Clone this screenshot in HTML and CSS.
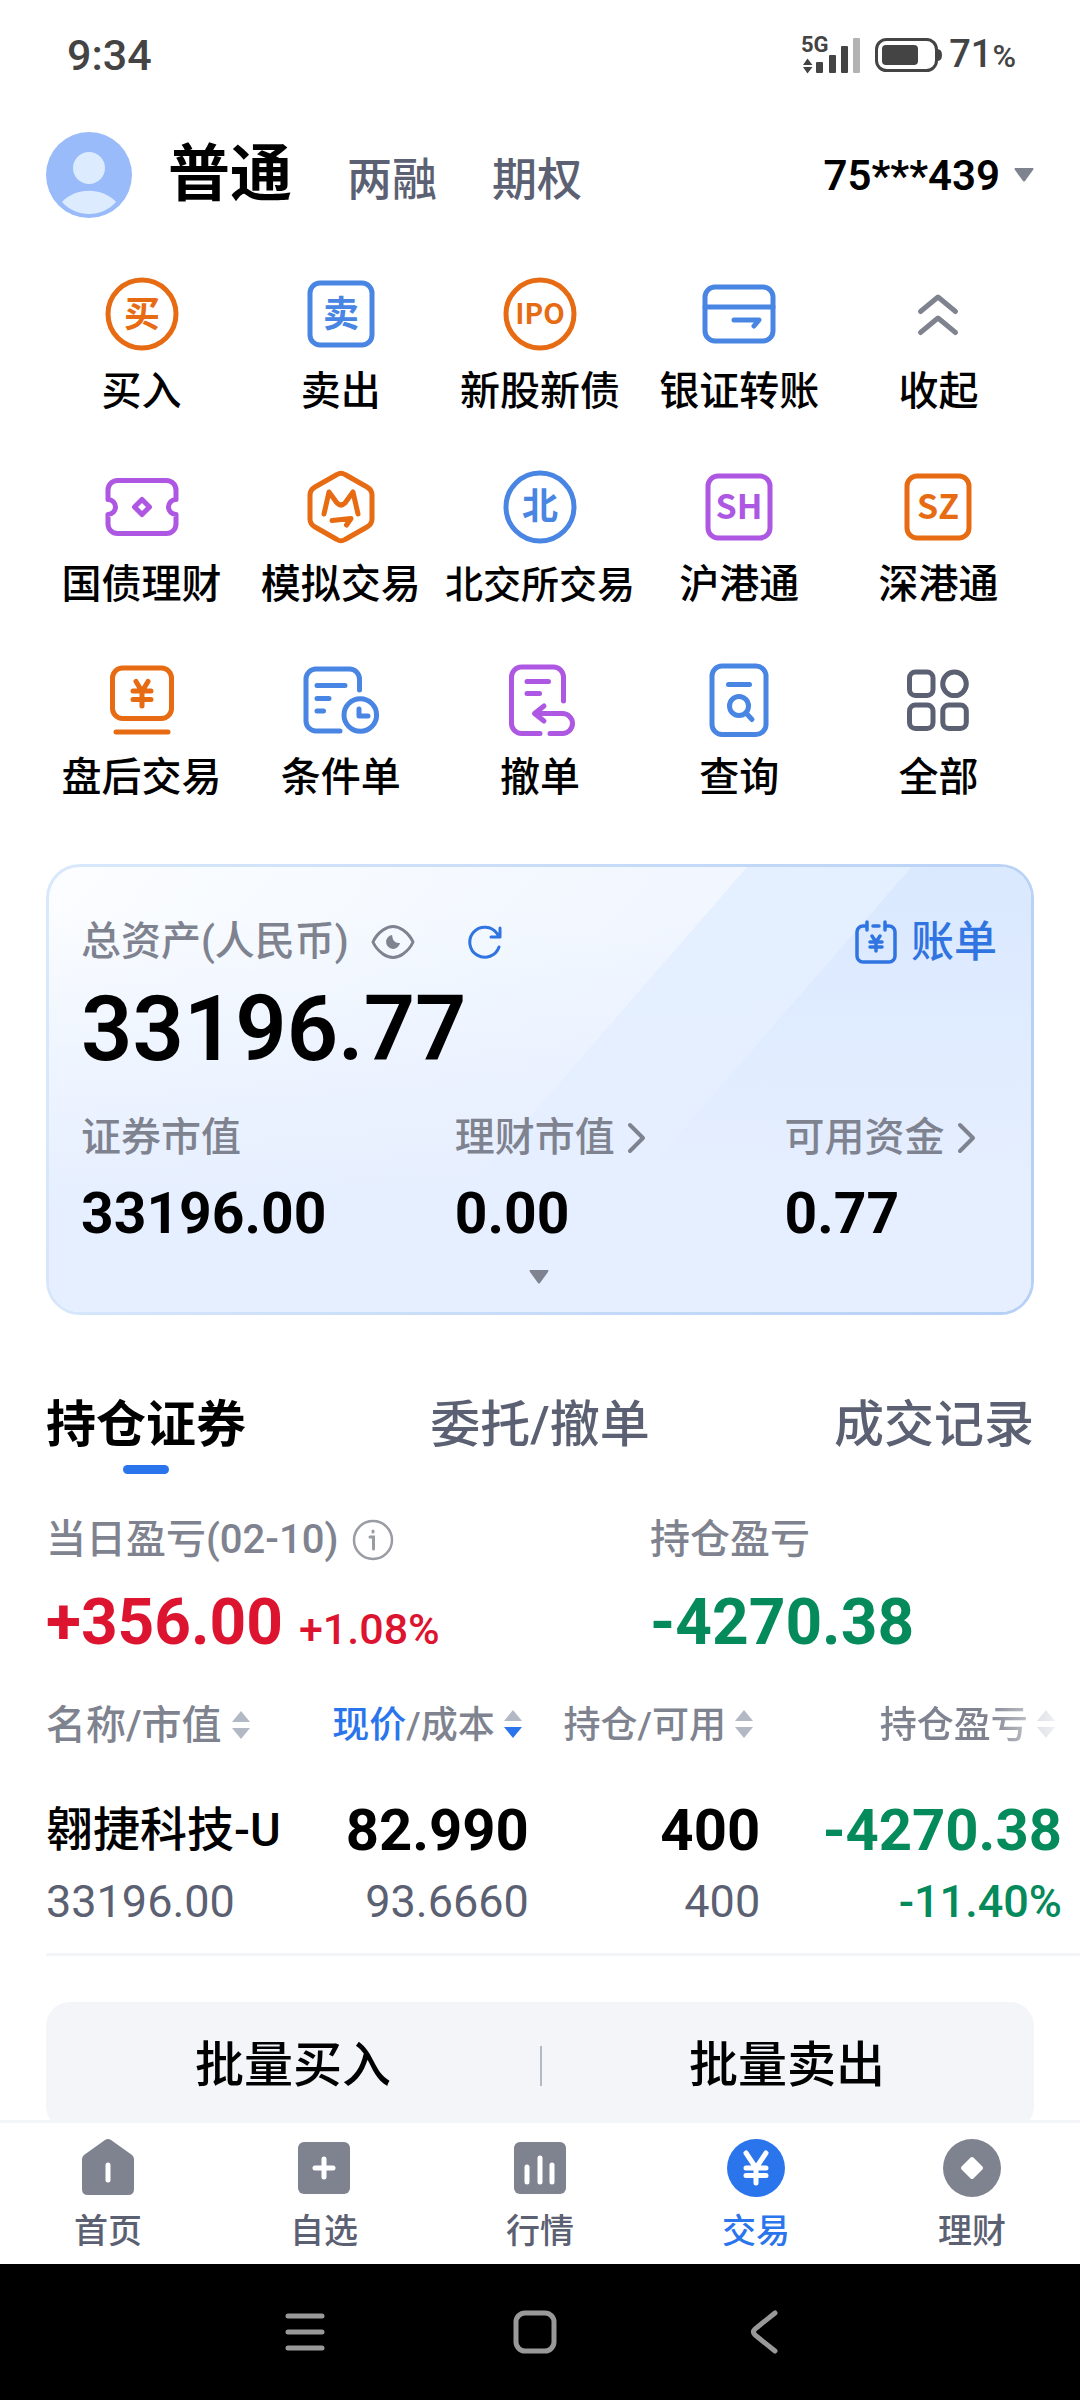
FILE: index.html
```html
<!DOCTYPE html>
<html lang="zh-CN">
<head>
    <meta charset="UTF-8">
    <meta name="viewport" content="width=device-width, initial-scale=1.0">
    <title>交易</title>
    <link rel="stylesheet" href="styles.css">
</head>
<body>
    <div class="app">
        <!-- Phone status bar -->
        <div class="status-bar">
            <span class="time">9:34</span>
            <div class="status-icons">
                <svg class="signal" viewBox="0 0 60 42" width="60" height="42">
                    <text x="0" y="18" class="signal-text">5G</text>
                    <path d="M6.500 24.500l5 6.500H2zM6.500 39.500l5-6.500H2z" />
                    <rect x="15" y="28" width="7" height="11" rx="1" />
                    <rect x="28" y="21" width="7" height="18" rx="1" />
                    <rect x="40" y="12" width="7" height="27" rx="1" />
                    <rect x="52" y="4" width="7" height="35" rx="1" fill="#b3b3b3" />
                </svg>
                <svg class="battery" viewBox="0 0 67 36" width="67" height="36">
                    <rect x="1.500" y="2.500" width="60" height="31" rx="10" fill="none" stroke="#444" stroke-width="3" />
                    <rect x="7" y="8" width="36" height="20" rx="4" />
                    <path d="M62 12q5 0 5 6t-5 6z" />
                </svg>
                <span class="battery-level">71<small>%</small></span>
            </div>
        </div>

        <!-- Account header -->
        <header class="header">
            <svg class="avatar" viewBox="0 0 86 86" width="86" height="86">
                <circle cx="43" cy="43" r="43" fill="#9abbf9" />
                <circle cx="43" cy="36" r="16" fill="#ddebff" />
                <path d="M16 70C30 55 56 55 70 70C56 86 30 86 16 70z" fill="#ddebff" />
            </svg>
            <nav class="account-types">
                <a href="#" class="active">普通</a>
                <a href="#">两融</a>
                <a href="#">期权</a>
            </nav>
            <button class="account-btn" type="button">75***439
                <svg viewBox="0 0 20 14" width="20" height="14"><path d="M1 0h18q1 0 0 2l-8 11q-1 1-2 0L1 2q-1-2 0-2z" fill="#7f8390" /></svg>
            </button>
        </header>

        <main class="content">
            <!-- Shortcuts -->
            <nav class="shortcuts">
                <a href="#" class="shortcut">
                    <svg class="icon orange" viewBox="0 0 80 80">
                        <circle cx="40" cy="40" r="34" />
                        <text x="40" y="53" class="cjk">买</text>
                    </svg>
                    <span>买入</span>
                </a>
                <a href="#" class="shortcut">
                    <svg class="icon blue" viewBox="0 0 80 80">
                        <rect x="9" y="9" width="62" height="62" rx="10" />
                        <text x="40" y="53" class="cjk">卖</text>
                    </svg>
                    <span>卖出</span>
                </a>
                <a href="#" class="shortcut">
                    <svg class="icon orange" viewBox="0 0 80 80">
                        <circle cx="40" cy="40" r="34" />
                        <text x="40" y="50" class="latin-small">IPO</text>
                    </svg>
                    <span>新股新债</span>
                </a>
                <a href="#" class="shortcut">
                    <svg class="icon blue" viewBox="0 0 80 80">
                        <rect x="6" y="13" width="68" height="54" rx="10" />
                        <path d="M6 33h68M35 46h25l-5 6" />
                    </svg>
                    <span>银证转账</span>
                </a>
                <a href="#" class="shortcut">
                    <svg class="icon gray" viewBox="0 0 80 80">
                        <path d="M22.500 37.500L40 23l17.500 14.500M22.500 58.500L40 44l17.500 14.500" />
                    </svg>
                    <span>收起</span>
                </a>
                <a href="#" class="shortcut">
                    <svg class="icon purple" viewBox="0 0 80 80">
                        <path d="M6 32.500V23a9.500 9.500 0 0 1 9.500-9.500h49A9.500 9.500 0 0 1 74 23v9.500a7.500 7.500 0 0 0 0 15V57a9.500 9.500 0 0 1-9.500 9.500h-49A9.500 9.500 0 0 1 6 57v-9.500a7.500 7.500 0 0 0 0-15z" />
                        <path d="M40 32.500l7.500 7.500-7.500 7.500-7.500-7.500z" />
                    </svg>
                    <span>国债理财</span>
                </a>
                <a href="#" class="shortcut">
                    <svg class="icon orange" viewBox="0 0 80 80">
                        <path d="M36 7.500q4-2.500 8 0L66 20q5 3 5 8v24q0 5-5 8L44 72.500q-4 2.500-8 0L14 60q-5-3-5-8V28q0-5 5-8z" />
                        <path d="M23 47l5-22 8 11q4 4 8 0l8-11 5 22M31 53.500l19-2-4.500 6.500" />
                    </svg>
                    <span>模拟交易</span>
                </a>
                <a href="#" class="shortcut">
                    <svg class="icon blue" viewBox="0 0 80 80">
                        <circle cx="40" cy="40" r="34" />
                        <text x="40" y="52" class="cjk">北</text>
                    </svg>
                    <span class="long">北交所交易</span>
                </a>
                <a href="#" class="shortcut">
                    <svg class="icon purple" viewBox="0 0 80 80">
                        <rect x="9" y="9" width="62" height="62" rx="10" />
                        <text x="40" y="52" class="latin">SH</text>
                    </svg>
                    <span>沪港通</span>
                </a>
                <a href="#" class="shortcut">
                    <svg class="icon orange" viewBox="0 0 80 80">
                        <rect x="9" y="9" width="62" height="62" rx="10" />
                        <text x="40" y="52" class="latin">SZ</text>
                    </svg>
                    <span>深港通</span>
                </a>
                <a href="#" class="shortcut">
                    <svg class="icon orange" viewBox="0 0 80 80">
                        <rect x="10.500" y="8" width="59" height="50.500" rx="10" />
                        <path d="M14 72h52M34 21.500l6 10 6-10M31 31h18M31 39.500h18M40 31v15" />
                    </svg>
                    <span>盘后交易</span>
                </a>
                <a href="#" class="shortcut">
                    <svg class="icon blue" viewBox="0 0 80 80">
                        <path d="M58.500 30V19a10 10 0 0 0-10-10H15A10 10 0 0 0 5 19v42a10 10 0 0 0 10 10h24" />
                        <path d="M16 25.500h28M16 38.500h12M16 51h6.500" />
                        <circle cx="59.300" cy="55" r="16.300" />
                        <path d="M58 49v7h9" />
                    </svg>
                    <span>条件单</span>
                </a>
                <a href="#" class="shortcut">
                    <svg class="icon purple" viewBox="0 0 80 80">
                        <path d="M63.500 41V17a10 10 0 0 0-10-10H21.500a10 10 0 0 0-10 10v46.500a10 10 0 0 0 10 10H40" />
                        <path d="M27 21.500h21.500M27 33.500h12.500M44 46l-9.500 7.500L44 61M35 53.500h27.500a10 10 0 0 1 0 20H50" />
                    </svg>
                    <span>撤单</span>
                </a>
                <a href="#" class="shortcut">
                    <svg class="icon blue" viewBox="0 0 80 80">
                        <rect x="13" y="6" width="54" height="68.500" rx="10" />
                        <path d="M29.500 24.500h21M47 53l6 6.500" />
                        <circle cx="40" cy="46" r="9.500" />
                    </svg>
                    <span>查询</span>
                </a>
                <a href="#" class="shortcut">
                    <svg class="icon dark" viewBox="0 0 80 80">
                        <rect x="11.500" y="12" width="23.500" height="23.500" rx="6" />
                        <circle cx="56.500" cy="23.800" r="11.800" />
                        <rect x="11.500" y="45" width="23.500" height="23.500" rx="6" />
                        <rect x="44.800" y="45" width="23.500" height="23.500" rx="6" />
                    </svg>
                    <span>全部</span>
                </a>
            </nav>

            <!-- Total assets -->
            <section class="assets-card">
                <div class="assets-top">
                    <span class="label">总资产(人民币)</span>
                    <button class="icon-btn eye-btn" type="button" aria-label="隐藏金额">
                        <svg viewBox="0 0 44 36" width="44" height="36" fill="none" stroke="#7f8390" stroke-width="3">
                            <path d="M2 18Q5 11 12 6Q22-1 32 6Q39 11 42 18Q39 25 32 30Q22 37 12 30Q5 25 2 18z" stroke-linejoin="round" />
                            <path d="M21 11a7 7 0 1 0 8 8q-7 1-8-8z" fill="#7f8390" stroke="none" />
                        </svg>
                    </button>
                    <button class="icon-btn" type="button" aria-label="刷新">
                        <svg viewBox="0 0 36 36" width="36" height="36" fill="none" stroke="#2f74e0" stroke-width="3" stroke-linecap="round" stroke-linejoin="round">
                            <path d="M32 23A15 15 0 1 1 30 9.500L32 12M33 4v9h-9" />
                        </svg>
                    </button>
                    <a href="#" class="bill-link">
                        <svg viewBox="0 0 42 44" width="42" height="44" fill="none" stroke="#2f74e0" stroke-width="3.500" stroke-linecap="round" stroke-linejoin="round">
                            <path d="M12 6H8a6 6 0 0 0-6 6v24a6 6 0 0 0 6 6h26a6 6 0 0 0 6-6V12a6 6 0 0 0-6-6h-4M12 2v8M30 2v8M18 6h6" />
                            <path d="M17 16l4 6 4-6M15 22h12M15 27h12M21 22v9" />
                        </svg>
                        账单
                    </a>
                </div>
                <div class="total">33196.77</div>
                <dl class="asset-list">
                    <div>
                        <dt>证券市值</dt>
                        <dd>33196.00</dd>
                    </div>
                    <div>
                        <dt>理财市值
                            <svg viewBox="0 0 20 32" width="20" height="32"><path d="M3 3l13 13L3 29" class="chevron" /></svg>
                        </dt>
                        <dd>0.00</dd>
                    </div>
                    <div>
                        <dt>可用资金
                            <svg viewBox="0 0 20 32" width="20" height="32"><path d="M3 3l13 13L3 29" class="chevron" /></svg>
                        </dt>
                        <dd>0.77</dd>
                    </div>
                </dl>
                <button class="icon-btn expand-btn" type="button" aria-label="展开">
                    <svg viewBox="0 0 20 14" width="20" height="14"><path d="M1 0h18q1 0 0 2l-8 11q-1 1-2 0L1 2q-1-2 0-2z" fill="#7f8390" /></svg>
                </button>
            </section>

            <!-- Holdings -->
            <section class="holdings">
                <div class="holding-tabs">
                    <button class="active" type="button">持仓证券</button>
                    <button type="button">委托/撤单</button>
                    <button type="button">成交记录</button>
                </div>

                <div class="profit">
                    <div>
                        <div class="profit-label">当日盈亏(02-10)
                            <svg viewBox="0 0 42 42" width="42" height="42" fill="none" stroke="#999ca3" stroke-width="2.500" stroke-linecap="round">
                                <circle cx="21" cy="21" r="19" />
                                <path d="M18 18h3.500v12M21 12v1" stroke-width="3" />
                            </svg>
                        </div>
                        <div class="profit-value up">+356.00 <small>+1.08%</small></div>
                    </div>
                    <div>
                        <div class="profit-label">持仓盈亏</div>
                        <div class="profit-value down">-4270.38</div>
                    </div>
                </div>

                <div class="table-wrap">
                    <table class="stock-table">
                        <thead>
                            <tr>
                                <th class="name-col">名称/市值 <svg class="sort" viewBox="0 0 18 28"><path d="M9 0l9 11H0z" /><path d="M9 28l9-11H0z" /></svg></th>
                                <th><b>现价</b>/成本 <svg class="sort" viewBox="0 0 18 28"><path d="M9 0l9 11H0z" /><path d="M9 28l9-11H0z" class="sort-on" /></svg></th>
                                <th>持仓/可用 <svg class="sort" viewBox="0 0 18 28"><path d="M9 0l9 11H0z" /><path d="M9 28l9-11H0z" /></svg></th>
                                <th class="fade">持仓盈亏 <svg class="sort" viewBox="0 0 18 28"><path d="M9 0l9 11H0z" /><path d="M9 28l9-11H0z" /></svg></th>
                            </tr>
                        </thead>
                        <tbody>
                            <tr class="main-row">
                                <td class="stock-name">翱捷科技-U</td>
                                <td>82.990</td>
                                <td>400</td>
                                <td class="down">-4270.38</td>
                            </tr>
                            <tr class="sub-row">
                                <td>33196.00</td>
                                <td>93.6660</td>
                                <td>400</td>
                                <td class="down">-11.40%</td>
                            </tr>
                        </tbody>
                    </table>
                </div>

                <div class="batch">
                    <button type="button">批量买入</button>
                    <button type="button">批量卖出</button>
                </div>
            </section>
        </main>

        <!-- Bottom tabs -->
        <nav class="tab-bar">
            <a href="#">
                <svg viewBox="0 0 60 60" fill="#7f8390">
                    <path d="M27 2q3-2 6 0l21 15q2 2 2 4v30q0 6-6 6H10q-6 0-6-6V21q0-2 2-4z" />
                    <path d="M30 27v15" stroke="#fff" stroke-width="5" stroke-linecap="round" />
                </svg>
                首页
            </a>
            <a href="#">
                <svg viewBox="0 0 60 60" fill="#7f8390">
                    <rect x="4" y="4" width="52" height="52" rx="6" />
                    <path d="M21 30h18M30 21v18" stroke="#fff" stroke-width="5" stroke-linecap="round" />
                </svg>
                自选
            </a>
            <a href="#">
                <svg viewBox="0 0 60 60" fill="#7f8390">
                    <rect x="4" y="4" width="52" height="52" rx="6" />
                    <path d="M17 29v15M30 20v24M42 27v17" stroke="#fff" stroke-width="5" stroke-linecap="round" />
                </svg>
                行情
            </a>
            <a href="#" class="active">
                <svg viewBox="0 0 60 60" fill="none" stroke="#fff" stroke-width="5" stroke-linecap="round" stroke-linejoin="round">
                    <circle cx="30" cy="30" r="29" fill="#2b75ec" stroke="none" />
                    <path d="M20 15l10 15 10-15M20 30h20M20 37.500h20M30 30v15" />
                </svg>
                交易
            </a>
            <a href="#">
                <svg viewBox="0 0 60 60" fill="#7f8390">
                    <circle cx="30" cy="30" r="29" />
                    <path d="M30 21l9 9-9 9-9-9z" fill="#fff" stroke="#fff" stroke-width="4" stroke-linejoin="round" />
                </svg>
                理财
            </a>
        </nav>

        <!-- Android navigation keys -->
        <div class="system-nav">
            <button type="button" aria-label="最近任务">
                <svg viewBox="0 0 44 44"><path d="M5 6h34M5 22h34M5 38h34" /></svg>
            </button>
            <button type="button" aria-label="主屏幕">
                <svg viewBox="0 0 44 44"><rect x="3" y="3" width="38" height="38" rx="9" /></svg>
            </button>
            <button type="button" aria-label="返回">
                <svg viewBox="0 0 44 44"><path d="M32 3L12 19q-3 3 0 6l20 16" /></svg>
            </button>
        </div>
    </div>
</body>
</html>
```

FILE: styles.css
```css
* {
    box-sizing: border-box;
}

body {
    margin: 0;
    font-family: Roboto, "Noto Sans CJK SC", sans-serif;
    background-color: #fff;
    color: #000;
}

a {
    color: inherit;
    text-decoration: none;
}

button {
    padding: 0;
    border: none;
    background: none;
    color: inherit;
    font: inherit;
    cursor: pointer;
}

svg {
    display: block;
    flex: none;
}

.app {
    display: flex;
    flex-direction: column;
    height: 100vh;
}

/* Status bar */
.status-bar {
    display: flex;
    justify-content: space-between;
    align-items: center;
    padding: 30px 64px 0 67px;
    color: #444;
    fill: #444;
    font-weight: 500;
    line-height: 48px;
}

.time {
    font-size: 43px;
}

.status-icons {
    display: flex;
    align-items: center;
}

.signal {
    overflow: visible;
}

.signal-text {
    font-size: 22px;
    font-weight: 700;
}

.battery {
    margin: 0 7px 0 14px;
}

.battery-level {
    font-size: 38px;
}

.battery-level small {
    font-size: 32px;
}

/* Header */
.header {
    display: flex;
    align-items: center;
    padding: 52px 46px 0;
}

.account-types {
    display: flex;
    align-items: baseline;
    gap: 55px;
    height: 86px;
    margin-left: 36px;
    color: #5b6172;
    font-size: 45px;
    font-weight: 500;
    line-height: 86px;
}

.account-types .active {
    color: #000;
    font-size: 62px;
    font-weight: 700;
}

.account-btn {
    display: flex;
    align-items: center;
    gap: 14px;
    margin-left: auto;
    font-size: 42px;
    font-weight: 600;
}

.content {
    flex: 1;
    min-height: 0;
    overflow: hidden;
}

/* Shortcut grid */
.shortcuts {
    display: grid;
    grid-template-columns: repeat(5, 1fr);
    row-gap: 51px;
    padding: 56px 42px 0;
}

.shortcut {
    display: flex;
    flex-direction: column;
    align-items: center;
    gap: 14px;
    font-size: 40px;
    font-weight: 500;
    line-height: 48px;
    white-space: nowrap;
}

.shortcut .long {
    font-size: 38px;
}

.icon {
    width: 80px;
    height: 80px;
    fill: none;
    stroke: currentColor;
    stroke-width: 5;
    stroke-linecap: round;
    stroke-linejoin: round;
}

.icon text {
    fill: currentColor;
    stroke: none;
    font-family: "Noto Sans CJK SC", sans-serif;
    font-weight: 700;
    text-anchor: middle;
}

.icon .cjk {
    font-size: 36px;
}

.icon .latin {
    font-size: 34px;
}

.icon .latin-small {
    font-size: 28px;
}

.orange {
    color: #e76b12;
}

.blue {
    color: #4985e2;
}

.purple {
    color: #ad57e2;
}

.gray {
    color: #7f8390;
}

.dark {
    color: #5b6172;
}

/* Assets card */
.assets-card {
    margin: 62px 46px 0;
    padding: 47px 34px 28px 32px;
    border: 3px solid transparent;
    border-radius: 34px;
    background:
        linear-gradient(to bottom, rgba(230, 239, 255, 0) 10%, #e6efff 75%) padding-box,
        linear-gradient(131deg, rgba(219, 233, 255, 0) 63%, #dbe9ff 63%) padding-box,
        linear-gradient(131deg, rgba(228, 239, 255, 0) 51%, #e4efff 51%) padding-box,
        linear-gradient(131deg, #fbfdff 0%, #f3f8ff 39%, #f1f6ff 51%) padding-box,
        linear-gradient(100deg, #d9e8fb, #b6d0f6) border-box;
}

.assets-top {
    display: flex;
    align-items: center;
    line-height: 56px;
}

.label,
.asset-list dt {
    color: #7f8390;
    font-size: 40px;
    font-weight: 500;
}

.icon-btn {
    display: block;
}

.eye-btn {
    margin: 0 52px 0 22px;
}

.bill-link {
    display: flex;
    align-items: center;
    gap: 14px;
    margin-left: auto;
    color: #2f74e0;
    font-size: 43px;
    font-weight: 500;
}

.total {
    margin-top: 12px;
    font-size: 90px;
    font-weight: 600;
    line-height: 96px;
}

.asset-list {
    display: grid;
    grid-template-columns: 373fr 329fr 212fr;
    margin: 32px 0 0;
}

.asset-list dt {
    display: flex;
    align-items: center;
    gap: 12px;
    line-height: 56px;
    white-space: nowrap;
}

.asset-list dd {
    margin: 12px 0 0;
    font-size: 57px;
    font-weight: 700;
    line-height: 72px;
}

.chevron {
    fill: none;
    stroke: #7f8390;
    stroke-width: 4;
    stroke-linecap: round;
    stroke-linejoin: round;
}

.expand-btn {
    margin: 20px auto 0;
}

/* Holdings */
.holdings {
    padding: 76px 0 0 46px;
}

.holding-tabs {
    display: flex;
    justify-content: space-between;
    padding-right: 46px;
    color: #5b6172;
    font-size: 50px;
    font-weight: 500;
    line-height: 68px;
}

.holding-tabs .active {
    color: #000;
    font-weight: 700;
}

.holding-tabs .active::after {
    content: "";
    display: block;
    width: 46px;
    height: 9px;
    margin: 6px auto 0;
    border-radius: 5px;
    background-color: #2b75ec;
}

.holding-tabs button {
    display: flex;
    flex-direction: column;
}

.profit {
    display: grid;
    grid-template-columns: 604fr 430fr;
    margin-top: 38px;
}

.profit-label {
    display: flex;
    align-items: center;
    gap: 14px;
    color: #7f8390;
    font-size: 40px;
    font-weight: 500;
    line-height: 56px;
}

.profit-value {
    margin-top: 15px;
    font-size: 64px;
    font-weight: 700;
    line-height: 80px;
}

.profit-value small {
    font-size: 43px;
    font-weight: 500;
}

.up {
    color: #dd1430;
}

.down {
    color: #048a5b;
}

.table-wrap {
    padding: 29px 18px 15px 0;
    border-bottom: 3px solid #f4f5f9;
}

.stock-table {
    width: 100%;
    border-collapse: collapse;
    table-layout: fixed;
    text-align: right;
    white-space: nowrap;
}

.stock-table th,
.stock-table td {
    width: 23%;
    padding: 0;
}

.stock-table th {
    padding-right: 7px;
    color: #7f8390;
    font-size: 37px;
    font-weight: 500;
    line-height: 56px;
}

.stock-table .name-col {
    width: 25%;
    font-size: 40px;
    text-align: left;
}

.stock-table .fade {
    width: 30%;
    -webkit-mask-image: linear-gradient(to right, #000 75%, rgba(0, 0, 0, 0.2) 98%);
    mask-image: linear-gradient(to right, #000 75%, rgba(0, 0, 0, 0.2) 98%);
}

.stock-table th b {
    color: #2b75ec;
    font-weight: 500;
}

.sort {
    display: inline-block;
    width: 18px;
    height: 28px;
    fill: #b3b8c5;
}

.sort-on {
    fill: #2b75ec;
}

.stock-table td:first-child {
    text-align: left;
}

.main-row td {
    padding-top: 40px;
    font-size: 58px;
    font-weight: 700;
    line-height: 72px;
}

.main-row .stock-name {
    font-size: 47px;
    font-weight: 500;
}

.sub-row td {
    color: #5b6172;
    font-size: 45px;
    line-height: 72px;
}

.sub-row td.down {
    color: #048a5b;
    font-weight: 500;
}

/* Batch buttons */
.batch {
    display: flex;
    margin: 46px 46px 0 0;
    border-radius: 24px;
    background-color: #f4f5f9;
}

.batch button {
    flex: 1;
    padding: 28px 0;
    font-size: 49px;
    font-weight: 500;
    line-height: 72px;
}

/* Divider between the two buttons */
.batch button + button {
    background: linear-gradient(#b3b8c5, #b3b8c5) left center / 2px 40px no-repeat;
}

/* Bottom tab bar */
.tab-bar {
    display: flex;
    border-top: 3px solid #f4f5f9;
    color: #5b6172;
    font-size: 34px;
    font-weight: 500;
    line-height: 44px;
}

.tab-bar a {
    display: flex;
    flex: 1;
    flex-direction: column;
    align-items: center;
    gap: 11px;
    padding: 15px 0 11px;
}

.tab-bar svg {
    width: 60px;
    height: 60px;
}

.tab-bar .active {
    color: #2b75ec;
}

/* System navigation */
.system-nav {
    display: flex;
    justify-content: center;
    gap: 186px;
    padding: 46px 10px 46px 0;
    background-color: #000;
}

.system-nav svg {
    width: 44px;
    height: 44px;
    fill: none;
    stroke: #999;
    stroke-width: 5;
    stroke-linecap: round;
}
```
